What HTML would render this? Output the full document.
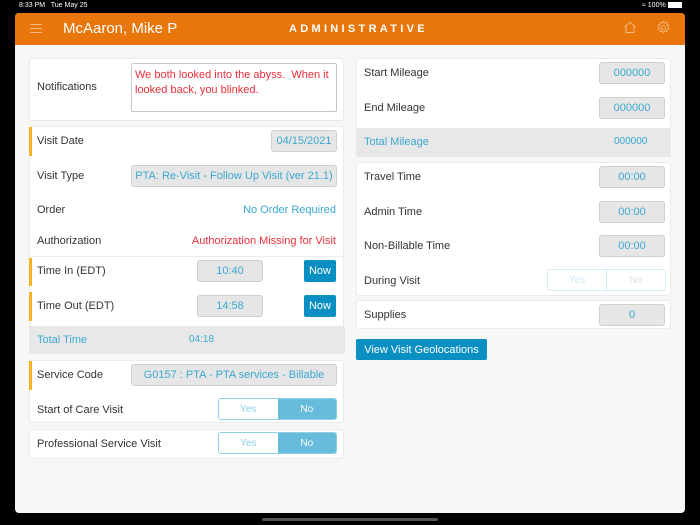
<!DOCTYPE html>
<html><head><meta charset="utf-8"><style>
*{box-sizing:border-box;margin:0;padding:0}
body{width:700px;height:525px;background:#000;font-family:"Liberation Sans",sans-serif;position:relative;overflow:hidden;color:#333}
.a{position:absolute}
.sb{color:#fff;font-size:7px;top:2px}
#frame{left:15px;top:13px;width:670px;height:500px;background:#f7f7f7;border-radius:4px;overflow:hidden}
#hdr{left:15px;top:13px;width:670px;height:32px;background:#e8760a;border-radius:4px 4px 0 0}
.card{position:absolute;background:#fff;border:1px solid #ebebeb;border-radius:3px}
.lbl{position:absolute;font-size:11px;color:#333}
.bar{position:absolute;left:-1px;width:3px;background:#f5b324}
.fld{position:absolute;background:#e6e6e6;border:1px solid #cfcfcf;border-radius:3px;color:#3aa8d0;font-size:11px;display:flex;align-items:center;justify-content:center;height:22px!important;white-space:nowrap}
.now{position:absolute;background:#0a8fc2;color:#fff;font-size:11px;border-radius:2px;width:32px;height:22px;display:flex;align-items:center;justify-content:center}
.tog{position:absolute;width:119px;height:22px;border:1px solid #8fd0e6;border-radius:3px;display:flex;font-size:10px;overflow:hidden}
.tog div{flex:1;display:flex;align-items:center;justify-content:center}
.gray{position:absolute;background:#e8e8e8}
</style></head><body>
<div class="a sb" style="left:19px">8:33 PM&nbsp;&nbsp; Tue May 25</div>
<div class="a sb" style="left:642px">&#8776; 100% <span style="display:inline-block;width:14px;height:6px;background:#fff;vertical-align:middle"></span></div>
<div id="frame" class="a"></div>
<div id="hdr" class="a"></div>
<div class="a" style="left:30px;top:24px;width:12px;height:1px;background:#f7b882;box-shadow:0 4px 0 #f7b882,0 8px 0 #f7b882"></div>
<div class="a" style="left:63px;top:20px;color:#fff;font-size:15px">McAaron, Mike P</div>
<div class="a" style="left:289px;top:23px;color:#fff;font-size:11px;font-weight:bold;letter-spacing:3.3px">ADMINISTRATIVE</div>
<svg class="a" style="left:623px;top:20px" width="14" height="14" viewBox="0 0 14 14"><path d="M1.5 7 L7 2 L12.5 7 M3 6 V12.5 H11 V6" fill="none" stroke="#f7b882" stroke-width="1"/></svg>
<svg class="a" style="left:656px;top:20px" width="15" height="15" viewBox="0 0 16 16"><circle cx="8" cy="8" r="2.2" fill="none" stroke="#f7b882"/><path d="M8 1.5 L9.3 3.3 L11.5 2.6 L11.6 4.8 L13.7 5.6 L12.5 7.5 L13.7 9.4 L11.6 10.2 L11.5 12.4 L9.3 11.7 L8 13.5 L6.7 11.7 L4.5 12.4 L4.4 10.2 L2.3 9.4 L3.5 7.5 L2.3 5.6 L4.4 4.8 L4.5 2.6 L6.7 3.3Z" fill="none" stroke="#f7b882" stroke-width="0.9"/></svg>

<div class="card" style="left:29px;top:58px;width:315px;height:63px">
 <div class="lbl" style="left:7px;top:22px">Notifications</div>
 <div class="a" style="left:101px;top:4px;width:206px;height:49px;border:1px solid #c8c8c8;border-radius:2px;color:#e8303a;font-size:11px;padding:4px 3px;line-height:15px">We both looked into the abyss.&nbsp; When it looked back, you blinked.</div>
</div>
<div class="card" style="left:29px;top:126px;width:315px;height:131px">
 <div class="bar" style="top:0;height:29px"></div>
 <div class="lbl" style="left:7px;top:8px">Visit Date</div>
 <div class="fld" style="left:241px;top:3px;width:66px">04/15/2021</div>
 <div class="lbl" style="left:7px;top:43px">Visit Type</div>
 <div class="fld" style="left:101px;top:38px;width:206px">PTA: Re-Visit - Follow Up Visit (ver 21.1)</div>
 <div class="lbl" style="left:7px;top:77px">Order</div>
 <div class="lbl" style="right:7px;top:77px;color:#3aa8d0">No Order Required</div>
 <div class="lbl" style="left:7px;top:108px">Authorization</div>
 <div class="lbl" style="right:7px;top:108px;color:#e8303a">Authorization Missing for Visit</div>
</div>
<div class="card" style="left:29px;top:256px;width:315px;height:97px">
 <div class="bar" style="top:1px;height:28px"></div>
 <div class="lbl" style="left:7px;top:8px">Time In (EDT)</div>
 <div class="fld" style="left:167px;top:3px;width:66px">10:40</div>
 <div class="now" style="left:274px;top:3px">Now</div>
 <div class="bar" style="top:35px;height:29px"></div>
 <div class="lbl" style="left:7px;top:43px">Time Out (EDT)</div>
 <div class="fld" style="left:167px;top:38px;width:66px">14:58</div>
 <div class="now" style="left:274px;top:38px">Now</div>
 <div class="gray" style="left:-1px;top:69px;width:316px;height:28px"></div>
 <div class="lbl" style="left:7px;top:77px;color:#3aa8d0">Total Time</div>
 <div class="lbl" style="left:159px;top:77px;color:#3aa8d0;font-size:10px">04:18</div>
</div>
<div class="card" style="left:29px;top:360px;width:315px;height:63px">
 <div class="bar" style="top:0;height:29px"></div>
 <div class="lbl" style="left:7px;top:8px">Service Code</div>
 <div class="fld" style="left:101px;top:3px;width:206px">G0157 : PTA - PTA services - Billable</div>
 <div class="lbl" style="left:7px;top:43px">Start of Care Visit</div>
 <div class="tog" style="left:188px;top:37px"><div style="color:#8fd0e6">Yes</div><div style="background:#66bcda;color:#fff">No</div></div>
</div>
<div class="card" style="left:29px;top:429px;width:315px;height:30px">
 <div class="lbl" style="left:7px;top:8px">Professional Service Visit</div>
 <div class="tog" style="left:188px;top:2px"><div style="color:#8fd0e6">Yes</div><div style="background:#66bcda;color:#fff">No</div></div>
</div>

<div class="card" style="left:356px;top:58px;width:315px;height:99px">
 <div class="lbl" style="left:7px;top:8px">Start Mileage</div>
 <div class="fld" style="left:242px;top:3px;width:66px">000000</div>
 <div class="lbl" style="left:7px;top:43px">End Mileage</div>
 <div class="fld" style="left:242px;top:38px;width:66px">000000</div>
 <div class="gray" style="left:0;top:69px;width:314px;height:29px"></div>
 <div class="lbl" style="left:7px;top:77px;color:#3aa8d0">Total Mileage</div>
 <div class="lbl" style="left:257px;top:77px;color:#3aa8d0;font-size:10px">000000</div>
</div>
<div class="card" style="left:356px;top:162px;width:315px;height:134px">
 <div class="lbl" style="left:7px;top:8px">Travel Time</div>
 <div class="fld" style="left:242px;top:3px;width:66px">00:00</div>
 <div class="lbl" style="left:7px;top:43px">Admin Time</div>
 <div class="fld" style="left:242px;top:38px;width:66px">00:00</div>
 <div class="lbl" style="left:7px;top:77px">Non-Billable Time</div>
 <div class="fld" style="left:242px;top:72px;width:66px">00:00</div>
 <div class="lbl" style="left:7px;top:112px">During Visit</div>
 <div class="tog" style="left:190px;top:106px;border-color:#d4eef7"><div style="color:#cdeaf4;border-right:1px solid #d4eef7">Yes</div><div style="color:#dde">No</div></div>
</div>
<div class="card" style="left:356px;top:300px;width:315px;height:29px">
 <div class="lbl" style="left:7px;top:8px">Supplies</div>
 <div class="fld" style="left:242px;top:3px;width:66px">0</div>
</div>
<div class="a" style="left:356px;top:339px;width:131px;height:21px;background:#0a8fc2;border-radius:2px;color:#fff;font-size:11px;display:flex;align-items:center;justify-content:center">View Visit Geolocations</div>

<div class="a" style="left:262px;top:518px;width:176px;height:3px;border-radius:2px;background:#555"></div>
</body></html>
